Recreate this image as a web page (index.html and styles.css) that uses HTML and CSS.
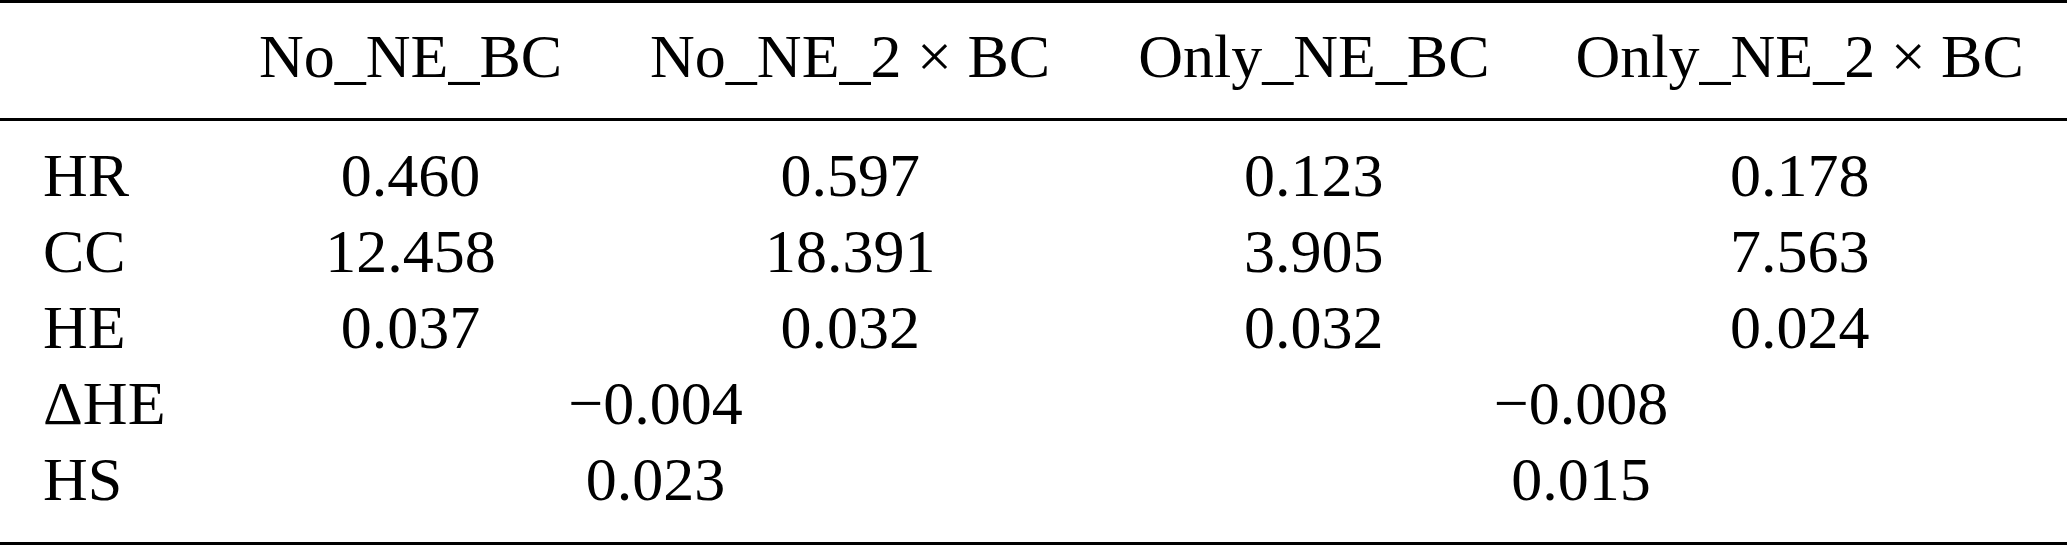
FILE: index.html
```html
<!DOCTYPE html>
<html>
<head>
    <title>Results table</title>
    <meta charset="utf-8">
    <link rel="stylesheet" href="styles.css">
</head>
<body>
    <table class="results">
        <thead>
            <tr>
                <th class="corner"></th>
                <th>No_NE_BC</th>
                <th class="wide">No_NE_2 × BC</th>
                <th>Only_NE_BC</th>
                <th>Only_NE_2 × BC</th>
            </tr>
        </thead>
        <tbody>
            <tr>
                <td class="label">HR</td>
                <td>0.460</td>
                <td>0.597</td>
                <td>0.123</td>
                <td>0.178</td>
            </tr>
            <tr>
                <td class="label">CC</td>
                <td>12.458</td>
                <td>18.391</td>
                <td>3.905</td>
                <td>7.563</td>
            </tr>
            <tr>
                <td class="label">HE</td>
                <td>0.037</td>
                <td>0.032</td>
                <td>0.032</td>
                <td>0.024</td>
            </tr>
            <tr>
                <td class="label">ΔHE</td>
                <td colspan="2">−0.004</td>
                <td colspan="2">−0.008</td>
            </tr>
            <tr>
                <td class="label">HS</td>
                <td colspan="2">0.023</td>
                <td colspan="2">0.015</td>
            </tr>
        </tbody>
    </table>
</body>
</html>
```

FILE: styles.css
```css
body {
    margin: 0;
    background: #fff;
    color: #000;
    font-family: 'Liberation Serif', 'Times New Roman', serif;
}
.results {
    border-collapse: separate;
    border-spacing: 0;
    font-size: 62px;
    line-height: 76px;
    border-top: 3px solid #000;
    border-bottom: 3px solid #000;
}
.results th,
.results td {
    padding: 0 43px;
    text-align: center;
    font-weight: normal;
    white-space: nowrap;
}
.results th {
    padding-top: 15px;
    padding-bottom: 24px;
    border-bottom: 3px solid #000;
}
.results .corner {
    width: 130px;
}
.results .wide {
    width: 404px;
}
.results td.label {
    text-align: left;
}
.results tbody tr:first-child td {
    padding-top: 16px;
}
.results tbody tr:last-child td {
    padding-bottom: 25px;
}
```
